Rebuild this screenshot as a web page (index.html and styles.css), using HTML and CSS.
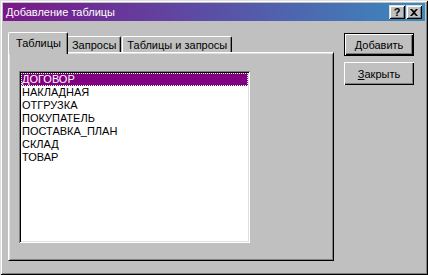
FILE: index.html
```html
<!DOCTYPE html>
<html>
  <head>
    <meta charset="UTF-8">
    <title>Добавление таблицы</title>
    <link rel="stylesheet" href="styles.css">
  </head>
  <body>
    <div class="window">
      <div class="titlebar">
        <span class="title">Добавление таблицы</span>
        <div class="caption-buttons">
          <button class="cap-btn help">?</button>
          <button class="cap-btn close">
            <svg width="8" height="7" viewBox="0 0 8 7">
              <path d="M0 0h2l2 2 2-2h2L5 3.5 8 7H6L4 5 2 7H0l3-3.5z" fill="#000"/>
            </svg>
          </button>
        </div>
      </div>

      <div class="content">
        <div class="tabs-area">
          <div class="tab-row">
            <div class="tab active">Таблицы</div>
            <div class="tab">Запросы</div>
            <div class="tab">Таблицы и запросы</div>
          </div>
          <div class="tab-panel">
            <ul class="listbox">
              <li class="selected"><span>ДОГОВОР</span></li>
              <li><span>НАКЛАДНАЯ</span></li>
              <li><span>ОТГРУЗКА</span></li>
              <li><span>ПОКУПАТЕЛЬ</span></li>
              <li><span>ПОСТАВКА_ПЛАН</span></li>
              <li><span>СКЛАД</span></li>
              <li><span>ТОВАР</span></li>
            </ul>
          </div>
        </div>

        <div class="side-buttons">
          <button class="btn default"><u>Д</u>обавить</button>
          <button class="btn"><u>З</u>акрыть</button>
        </div>
      </div>
    </div>
  </body>
</html>
```

FILE: styles.css
```css
/* Classic dialog look */
body {
  margin: 0;
  background: #c0c0c0;
  font-family: "Liberation Sans", Arial, sans-serif;
  font-size: 11px;
  color: #000;
}

.window {
  width: 428px;
  height: 275px;
  box-sizing: border-box;
  padding: 3px;
  background: #c0c0c0;
  box-shadow: inset 1px 1px #dfdfdf, inset -1px -1px #000,
              inset 2px 2px #fff, inset -2px -2px #808080;
}

/* Title bar */
.titlebar {
  height: 18px;
  display: flex;
  align-items: center;
  justify-content: space-between;
  padding: 0 3px 0 3px;
  background: linear-gradient(to right, #7a1788, #5d4aa4 45%, #3a8abd);
  color: #fff;
}

.title {
  font-size: 11px;
  line-height: 18px;
}

.caption-buttons {
  display: flex;
  gap: 1px;
}

.cap-btn {
  width: 16px;
  height: 14px;
  padding: 0;
  border: none;
  background: #c0c0c0;
  box-shadow: inset 1px 1px #dfdfdf, inset -1px -1px #000,
              inset 2px 2px #fff, inset -2px -2px #808080;
  display: flex;
  align-items: center;
  justify-content: center;
  font-family: "Liberation Sans", Arial, sans-serif;
}

.help {
  font-weight: bold;
  font-size: 11px;
  line-height: 12px;
}

/* Main area */
.content {
  display: flex;
  padding: 11px 0 0 5px;
}

.tabs-area {
  width: 326px;
}

.tab-row {
  display: flex;
  align-items: flex-end;
  height: 20px;
  padding-left: 1px;
}

.tab {
  position: relative;
  height: 16px;
  box-sizing: border-box;
  padding: 2px 4px 0 4px;
  line-height: 13px;
  background: #c0c0c0;
  border-top: 1px solid #fff;
  border-left: 1px solid #fff;
  border-right: 1px solid #000;
  border-radius: 2px 2px 0 0;
  box-shadow: inset -1px 0 #808080;
  margin-right: 1px;
}

.tab.active {
  height: 22px;
  margin: 0 -1px -2px -1px;
  padding: 4px 6px 0 7px;
  z-index: 1;
}

.tab-panel {
  height: 209px;
  box-sizing: border-box;
  padding: 18px 0 0 10px;
  border-top: 1px solid #fff;
  border-left: 1px solid #fff;
  border-right: 1px solid #000;
  border-bottom: 1px solid #000;
  box-shadow: inset 1px 1px #dfdfdf, inset -1px -1px #808080;
}

/* List of tables */
.listbox {
  list-style: none;
  margin: 0;
  width: 231px;
  height: 172px;
  box-sizing: border-box;
  padding: 2px;
  background: #fff;
  box-shadow: inset 1px 1px #808080, inset -1px -1px #fff,
              inset 2px 2px #000, inset -2px -2px #dfdfdf;
}

.listbox li {
  height: 13px;
  line-height: 13px;
  padding-left: 1px;
  white-space: nowrap;
}

.listbox li.selected {
  background: #800080;
  color: #fff;
  outline: 1px dotted #fff;
  outline-offset: -1px;
}

/* Buttons on the right */
.side-buttons {
  display: flex;
  flex-direction: column;
  gap: 6px;
  margin-left: 10px;
  padding-top: 1px;
}

.btn {
  width: 70px;
  height: 23px;
  padding: 0;
  border: none;
  background: #c0c0c0;
  font-family: "Liberation Sans", Arial, sans-serif;
  font-size: 11px;
  color: #000;
  box-shadow: inset 1px 1px #fff, inset -1px -1px #000,
              inset -2px -2px #808080;
}

.btn.default {
  box-shadow: inset 0 0 0 1px #000, inset 2px 2px #fff,
              inset -2px -2px #000, inset -3px -3px #808080;
}
```
